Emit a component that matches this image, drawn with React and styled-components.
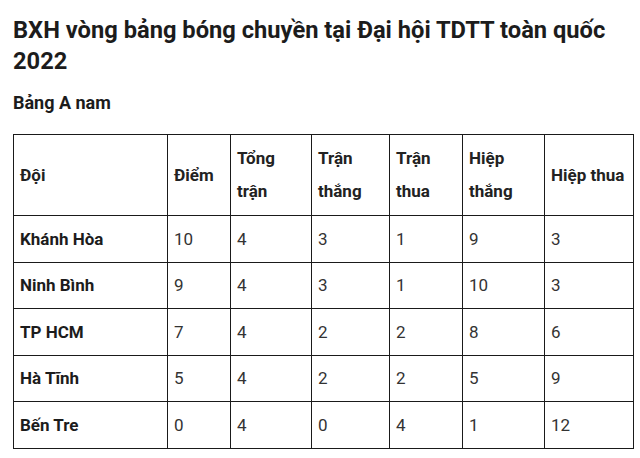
import React from 'react'
import styled, { createGlobalStyle } from 'styled-components'

const GlobalStyle = createGlobalStyle`
    body {
        margin: 0;
        background: #ffffff;
        font-family: Roboto, "Liberation Sans", sans-serif;
        color: #222222;
    }
`
const StyledPage = styled.div`
    padding: 15px 6px 0 13px;
    width: 640px;
    box-sizing: border-box;
`
const StyledTitle = styled.h2`
    margin: 0;
    font-size: 23.7px;
    line-height: 31px;
    font-weight: 700;
    color: #1c1c1c;
`
const StyledSubtitle = styled.h3`
    margin: 14px 0 0 0;
    font-size: 18px;
    line-height: 24px;
    font-weight: 700;
    color: #1c1c1c;
`
const StyledTable = styled.table`
    margin-top: 19px;
    width: 621px;
    border-collapse: collapse;
    table-layout: fixed;
    font-size: 17px;
`
const StyledHeadCell = styled.th`
    border: 1px solid #1a1a1a;
    padding: 7px 6px;
    text-align: left;
    vertical-align: middle;
    font-weight: 700;
    line-height: 33px;
    height: 78px;
    box-sizing: border-box;
`
const StyledCell = styled.td`
    border: 1px solid #1a1a1a;
    padding: 0 6px;
    height: 45.5px;
    line-height: 26px;
    vertical-align: middle;
    font-weight: ${props => (props.$bold ? 700 : 400)};
    color: ${props => (props.$bold ? '#1c1c1c' : '#333333')};
`

const columns = [
    { label: 'Đội', width: 154 },
    { label: 'Điểm', width: 63 },
    { label: 'Tổng trận', width: 81 },
    { label: 'Trận thắng', width: 78 },
    { label: 'Trận thua', width: 73 },
    { label: 'Hiệp thắng', width: 82 },
    { label: 'Hiệp thua', width: 89 },
]

const rows = [
    ['Khánh Hòa', 10, 4, 3, 1, 9, 3],
    ['Ninh Bình', 9, 4, 3, 1, 10, 3],
    ['TP HCM', 7, 4, 2, 2, 8, 6],
    ['Hà Tĩnh', 5, 4, 2, 2, 5, 9],
    ['Bến Tre', 0, 4, 0, 4, 1, 12],
]

const App = () => {
    return (
        <StyledPage>
            <GlobalStyle />
            <StyledTitle>BXH vòng bảng bóng chuyền tại Đại hội TDTT toàn quốc 2022</StyledTitle>
            <StyledSubtitle>Bảng A nam</StyledSubtitle>
            <StyledTable>
                <colgroup>
                    {columns.map(col => <col key={col.label} style={{ width: col.width }} />)}
                </colgroup>
                <thead>
                    <tr>
                        {columns.map(col => <StyledHeadCell key={col.label}>{col.label}</StyledHeadCell>)}
                    </tr>
                </thead>
                <tbody>
                    {rows.map(row => (
                        <tr key={row[0]}>
                            {row.map((value, i) => (
                                <StyledCell key={i} $bold={i === 0}>{value}</StyledCell>
                            ))}
                        </tr>
                    ))}
                </tbody>
            </StyledTable>
        </StyledPage>
    )
}

export default App
